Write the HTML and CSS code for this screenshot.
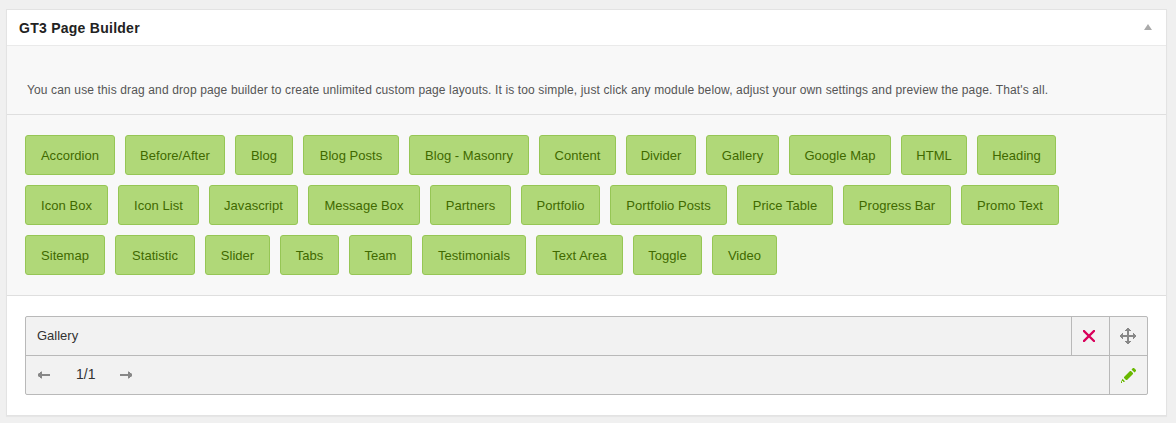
FILE: index.html
```html
<!DOCTYPE html>
<html lang="en">
<head>
<meta charset="utf-8">
<title>GT3 Page Builder</title>
<link rel="stylesheet" href="styles.css">
</head>
<body>
<section class="postbox">
  <header class="postbox-header">
    <h3 class="postbox-title">GT3 Page Builder</h3>
    <svg class="toggle-arrow" width="8" height="6" viewBox="0 0 8 6"><path d="M4 0L8 6H0Z" fill="#aaa"/></svg>
  </header>
  <p class="intro"><span class="intro-text">You can use this drag and drop page builder to create unlimited custom page layouts. It is too simple, just click any module below, adjust your own settings and preview the page. That's all.</span></p>
  <div class="modules">
    <div class="module-row">
      <a class="module w90">Accordion</a><a class="module w100">Before/After</a><a class="module w58">Blog</a><a class="module w96">Blog Posts</a><a class="module w120">Blog - Masonry</a><a class="module w77">Content</a><a class="module w70">Divider</a><a class="module w73">Gallery</a><a class="module w102">Google Map</a><a class="module w66">HTML</a><a class="module w79">Heading</a>
    </div>
    <div class="module-row">
      <a class="module w83">Icon Box</a><a class="module w81">Icon List</a><a class="module w89">Javascript</a><a class="module w112">Message Box</a><a class="module w81">Partners</a><a class="module w79">Portfolio</a><a class="module w117">Portfolio Posts</a><a class="module w96">Price Table</a><a class="module w108">Progress Bar</a><a class="module w98">Promo Text</a>
    </div>
    <div class="module-row">
      <a class="module w80">Sitemap</a><a class="module w80">Statistic</a><a class="module w65">Slider</a><a class="module w59">Tabs</a><a class="module w63">Team</a><a class="module w104">Testimonials</a><a class="module w87">Text Area</a><a class="module w69">Toggle</a><a class="module w65">Video</a>
    </div>
  </div>
  <div class="canvas">
    <div class="item">
      <div class="item-row item-head">
        <span class="item-name">Gallery</span>
        <span class="cell cell-inset"><svg width="12" height="12" viewBox="0 0 12 12"><path d="M1 1L11 11M11 1L1 11" stroke="#d9005b" stroke-width="2.3" stroke-linecap="square"/></svg></span>
        <span class="cell"><svg width="16" height="16" viewBox="0 0 16 16" fill="#888"><path d="M7 3H5V2H6V1H7V0H9V1H10V2H11V3H9V7H13V5H14V6H15V7H16V9H15V10H14V11H13V9H9V13H11V14H10V15H9V16H7V15H6V14H5V13H7V9H3V11H2V10H1V9H0V7H1V6H2V5H3V7H7Z"/></svg></span>
      </div>
      <div class="item-row">
        <div class="pager">
          <svg width="12" height="8" viewBox="0 0 12 8"><path d="M0 3L1 2H2V1H3L4 0V3H12V5H4V8L3 7H2V6H1L0 5Z" fill="#888"/></svg>
          <span class="size">1/1</span>
          <svg width="12" height="8" viewBox="0 0 12 8"><path d="M12 3L11 2H10V1H9L8 0V3H0V5H8V8L9 7H10V6H11L12 5Z" fill="#888"/></svg>
        </div>
        <span class="cell cell-inset"><svg width="15" height="15" viewBox="0 0 15 15" fill="#69b800"><path d="M3 9L9 3H10L12 5V6L6 12H5L3 10ZM10.5 1.5L12 0H13L15 2V3L13.5 4.5ZM1.5 10.8L4.2 13.4L2 14V13H1V15H0V14Z"/></svg></span>
      </div>
    </div>
  </div>
</section>
</body>
</html>
```
FILE: styles.css
```css
* { box-sizing: border-box; }
body {
  margin: 0;
  padding: 9px 9px 0 6px;
  height: 423px;
  overflow: hidden;
  background: #f0f0f0;
  font-family: "Liberation Sans", Arial, sans-serif;
}
svg { display: block; flex: none; }
.postbox {
  height: 407px;
  background: #fff;
  border: 1px solid #e3e3e3;
  box-shadow: 0 1px 1px rgba(0, 0, 0, .04);
}
.postbox-header {
  display: flex;
  align-items: center;
  justify-content: space-between;
  height: 36px;
  padding: 0 14px 0 12px;
  border-bottom: 1px solid #eaeaea;
}
.toggle-arrow { margin-bottom: 2px; }
.postbox-title {
  margin: 0;
  color: #222;
  font-size: 14px;
  font-weight: bold;
  line-height: 20px;
  letter-spacing: .26px;
}
.intro {
  height: 69px;
  margin: 0;
  padding: 34px 20px 0;
  background: #f8f8f8;
  border-bottom: 1px solid #dfdfdf;
  color: #555;
  font-size: 12px;
  line-height: 20px;
  white-space: nowrap;
}
.intro-text { letter-spacing: .135px; }
.modules {
  display: flex;
  flex-direction: column;
  gap: 10px;
  height: 181px;
  padding: 20px 18px;
  background: #f8f8f8;
  border-bottom: 1px solid #dfdfdf;
}
.module-row { display: flex; gap: 10px; }
.module {
  flex: none;
  height: 40px;
  background: #b0d878;
  border: 1px solid #96c655;
  border-radius: 3px;
  color: #406900;
  font-size: 13px;
  line-height: 39px;
  letter-spacing: .04px;
  text-align: center;
  white-space: nowrap;
}
.w58 { width: 58px; }
.w59 { width: 59px; }
.w63 { width: 63px; }
.w65 { width: 65px; }
.w66 { width: 66px; }
.w69 { width: 69px; }
.w70 { width: 70px; }
.w73 { width: 73px; }
.w77 { width: 77px; }
.w79 { width: 79px; }
.w80 { width: 80px; }
.w81 { width: 81px; }
.w83 { width: 83px; }
.w87 { width: 87px; }
.w89 { width: 89px; }
.w90 { width: 90px; }
.w96 { width: 96px; }
.w98 { width: 98px; }
.w100 { width: 100px; }
.w102 { width: 102px; }
.w104 { width: 104px; }
.w108 { width: 108px; }
.w112 { width: 112px; }
.w117 { width: 117px; }
.w120 { width: 120px; }
.canvas { padding: 20px 18px; }
.item {
  height: 79px;
  background: #f2f2f2;
  border: 1px solid #b9b9b9;
  border-radius: 2px;
  color: #333;
  font-size: 13px;
}
.item-row { display: flex; height: 38px; }
.item-head { height: 39px; border-bottom: 1px solid #b9b9b9; }
.item-name { flex: 1; padding-left: 11px; line-height: 37px; letter-spacing: 0; }
.cell {
  display: flex;
  align-items: center;
  width: 38px;
  padding-left: 10px;
  border-left: 1px solid #b9b9b9;
}
.cell-inset { padding-left: 11px; }
.pager { display: flex; flex: 1; align-items: center; padding-left: 12px; }
.size { width: 70px; padding-left: 26px; line-height: 36px; font-size: 14px; height: 38px; }
```
